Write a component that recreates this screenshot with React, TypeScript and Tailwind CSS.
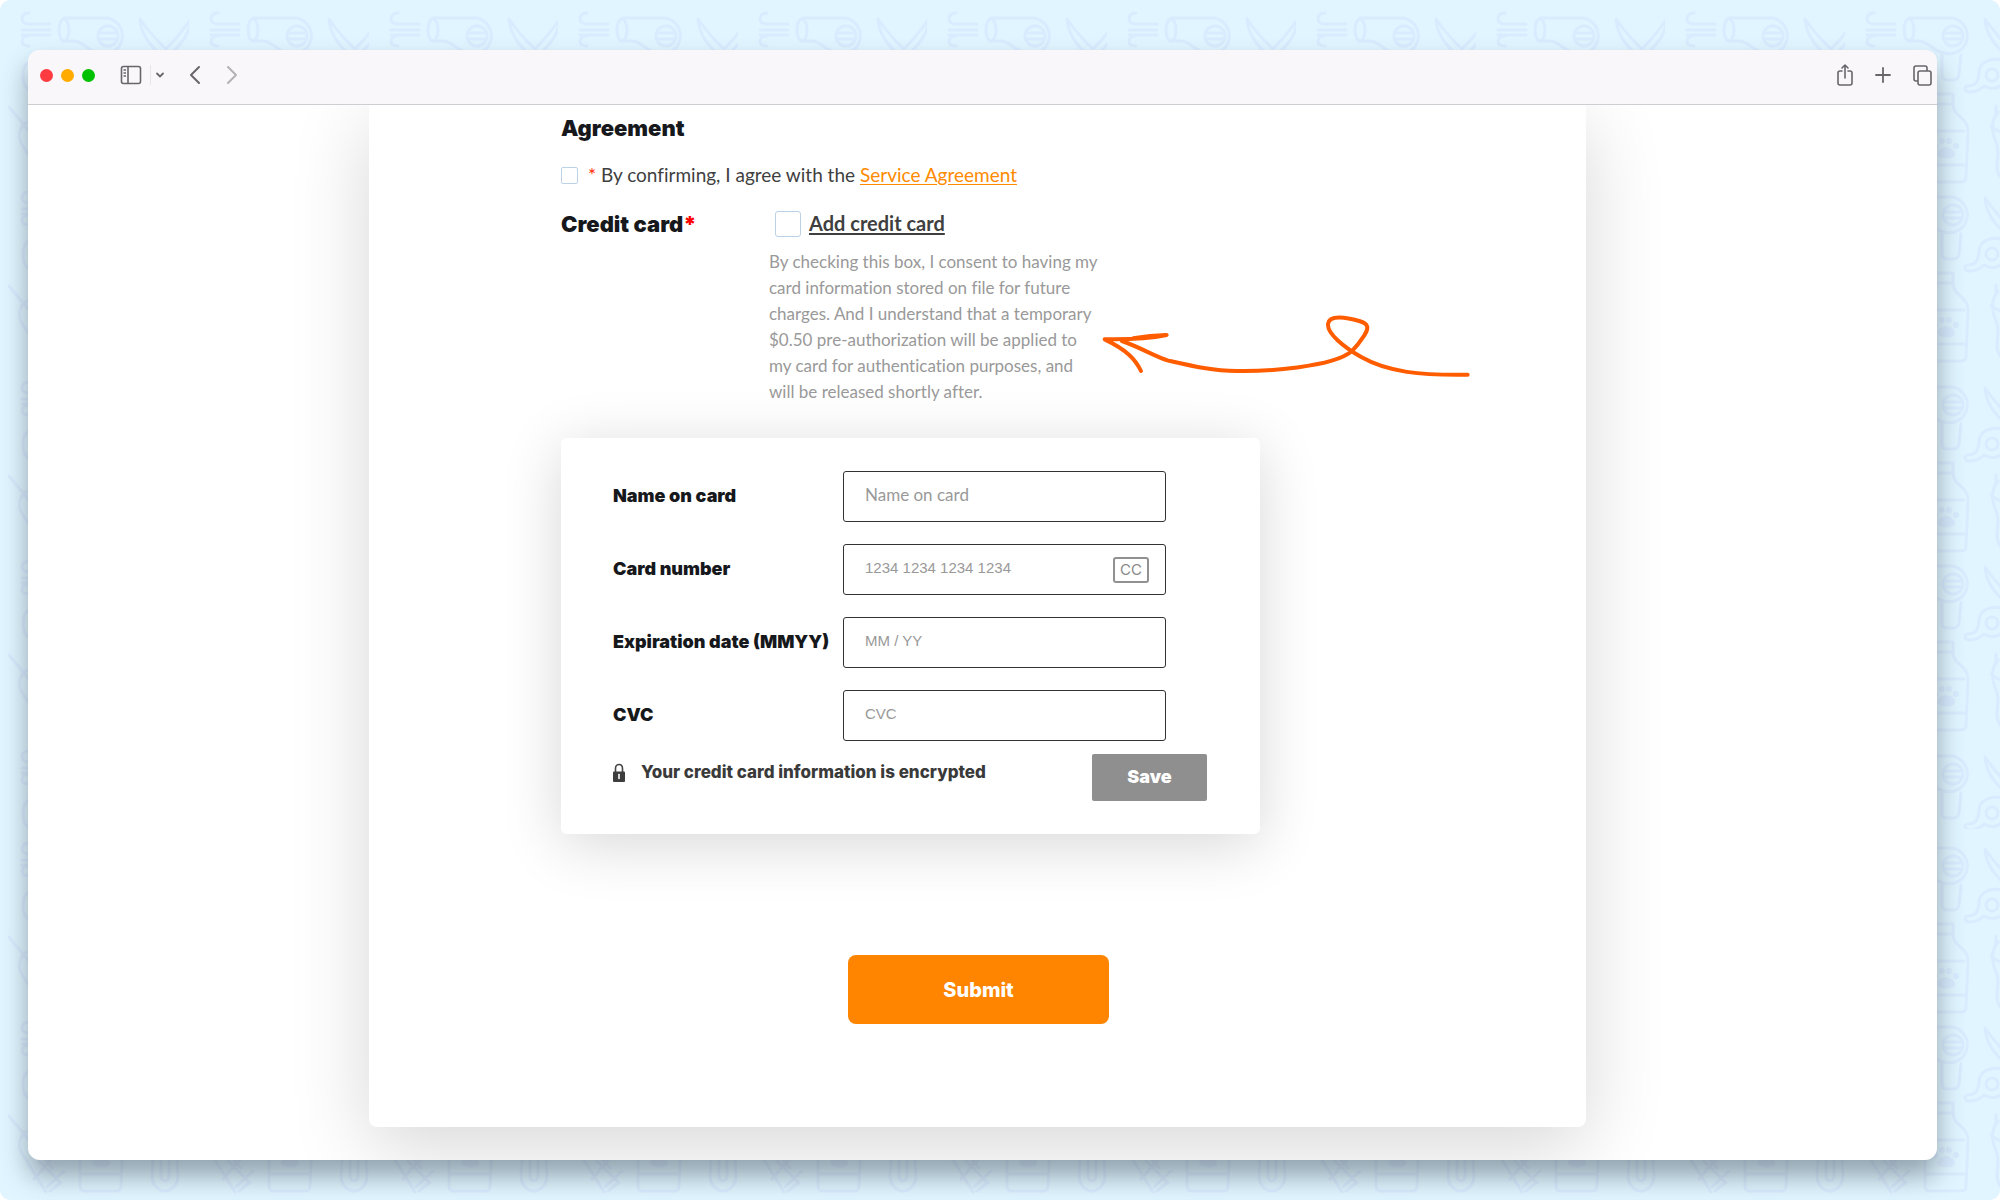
import { useState } from 'react';
import type { ReactNode } from 'react';

const TILE_COLUMNS = [0, 189, 369, 558, 738, 927, 1107, 1296, 1476, 1665, 1845];
const TILE_ROWS = [0, 179, 369, 548, 738, 830, 1009];

const cardFields = [
  { id: 'card-name', label: 'Name on card', placeholder: 'Name on card', inputFont: 'font-[Lato] text-[17px]' },
  { id: 'card-number', label: 'Card number', placeholder: '1234 1234 1234 1234', inputFont: "font-['Liberation_Sans'] text-[15px]" },
  { id: 'card-expiry', label: 'Expiration date (MMYY)', placeholder: 'MM / YY', inputFont: "font-['Liberation_Sans'] text-[15px]" },
  { id: 'card-cvc', label: 'CVC', placeholder: 'CVC', inputFont: "font-['Liberation_Sans'] text-[15px]" },
];

// Grooming tools wallpaper behind the browser window
function Wallpaper() {
  return (
    <svg className="absolute inset-0 h-full w-full" fill="none" stroke="#d9ebfe" strokeWidth="3" strokeLinecap="round" strokeLinejoin="round" aria-hidden="true">
      <defs>
        <g id="tools">
          {/* Wind */}
          <path d="M29 13c-5 0-7 3-7 6s3 5 7 5h21M22 30h28M22 35h28M29 46c-5 0-7-2-7-5s3-5 7-5" />
          {/* Hair dryer */}
          <ellipse cx="64" cy="30" rx="5" ry="11" />
          <path d="M64 18h43a18 18 0 1 1-8 35C88 51 83 41 74 41H64M97 55v20q0 5 5 5h6q5 0 6-5l2-20" />
          <circle cx="108" cy="36" r="10" />
          <path d="M99 33h18M99 39h18" />
          {/* Scissors */}
          <path d="M140 19c1 14 8 25 23 38l3-8c-11-10-19-20-26-30zM191 19c-1 14-8 25-28 42M191 19c-7 10-15 20-25 30" />
          <circle cx="147" cy="75" r="6" />
          <path d="M160 61c-14-5-26 1-26 12-1 11-5 13-12 13-3 1-2 6 2 6 7 0 11-2 15-6 8 5 17 2 20-5" />
          {/* Brush and syringe */}
          <path d="M30 62c-6 2-7 7-7 14s2 12 7 14M9 107l15 18c-6 6-6 14-1 21l23 37M21 128c2-5 8-8 12-4M9 107l43 52M34 170l19-22M47 178l17-16M39 152l22 22M50 182l10-8" />
          {/* Shampoo bottle */}
          <path d="M84 94h24v10H84zM88 104c0 14-8 15-8 27v46q0 5 5 5h31q5 0 5-5l2-46c0-14-15-14-15-27M80 131h39M80 165h39" />
          <path d="M92 154c2-9 16-9 18 0 0 6-16 6-18 0z" fill="#d9ebfe" stroke="none" />
          <g fill="#d9ebfe" stroke="none">
            <circle cx="90" cy="146" r="3" />
            <circle cx="97" cy="141" r="3" />
            <circle cx="104" cy="141" r="3" />
            <circle cx="111" cy="146" r="3" />
          </g>
          {/* Clipper */}
          <path d="M153 112c-8 10-6 20-2 30 4 8 1 14 1 26 1 9 7 14 13 14s12-5 13-14c0-12-3-18 1-26M151 106v9M161 145h8v23q-1 4-4 4t-4-4zM146 126c6 6 14 8 22 8" />
        </g>
      </defs>
      {TILE_ROWS.map((y) =>
        TILE_COLUMNS.map((x, i) => (
          <svg key={`${x}-${y}`} x={x} y={y} width={i % 2 ? 180 : 189} height={y === 738 ? 91 : 189}>
            <use href="#tools" />
          </svg>
        ))
      )}
    </svg>
  );
}

function ToolbarButton({ label, className = '', children }: { label: string; className?: string; children: ReactNode }) {
  return (
    <button type="button" aria-label={label} className={`flex shrink-0 items-center justify-center ${className}`}>
      {children}
    </button>
  );
}

function Toolbar() {
  return (
    <header className="relative z-10 flex h-[55px] items-center border-b border-[#cfccd2] bg-[#faf7fb] pr-1 pb-1 pl-3 text-[#69656b]">
      <div className="flex gap-2">
        <span className="h-[13px] w-[13px] rounded-full bg-[#ff3b42]" />
        <span className="h-[13px] w-[13px] rounded-full bg-[#ffab00]" />
        <span className="h-[13px] w-[13px] rounded-full bg-[#00c100]" />
      </div>
      <ToolbarButton label="Toggle sidebar" className="ml-[25px]">
        <svg width="22" height="20" fill="none" stroke="currentColor" strokeWidth="1.6">
          <rect x="1.5" y="1.5" width="19" height="17" rx="2" />
          <path d="M8 1.5v17M3.5 5H6M3.5 8H6M3.5 11H6" />
        </svg>
      </ToolbarButton>
      <span className="ml-2 h-5 w-px bg-[#e9e5ea]" />
      <ToolbarButton label="Tab groups" className="ml-1">
        <svg width="10" height="8" fill="none" stroke="currentColor" strokeWidth="1.8" strokeLinecap="round">
          <path d="M2 2.500 5 5.500 8 2.500" />
        </svg>
      </ToolbarButton>
      <ToolbarButton label="Back" className="ml-6">
        <svg width="12" height="20" fill="none" stroke="currentColor" strokeWidth="2" strokeLinecap="round" strokeLinejoin="round">
          <path d="M10 2 2 10l8 8" />
        </svg>
      </ToolbarButton>
      <ToolbarButton label="Forward" className="ml-[25px] text-[#b5b1b7]">
        <svg width="12" height="20" fill="none" stroke="currentColor" strokeWidth="2" strokeLinecap="round" strokeLinejoin="round">
          <path d="m2 2 8 8-8 8" />
        </svg>
      </ToolbarButton>
      <div className="ml-auto flex items-center gap-[21px]">
        <ToolbarButton label="Share">
          <svg width="18" height="24" fill="none" stroke="currentColor" strokeWidth="1.6" strokeLinecap="round" strokeLinejoin="round">
            <path d="M6 8H4Q2 8 2 10v10q0 2 2 2h10q2 0 2-2V10q0-2-2-2h-2M9 15V2M6 5l3-3 3 3" />
          </svg>
        </ToolbarButton>
        <ToolbarButton label="New tab">
          <svg width="16" height="18" fill="none" stroke="currentColor" strokeWidth="1.8" strokeLinecap="round">
            <path d="M8 2v14M1 9h14" />
          </svg>
        </ToolbarButton>
        <ToolbarButton label="Tab overview">
          <svg width="21" height="23" fill="none" stroke="currentColor" strokeWidth="1.6" strokeLinejoin="round">
            <rect x="6" y="7" width="13" height="14" rx="2" />
            <path d="M6 17H4q-2 0-2-2V4q0-2 2-2h9q2 0 2 2v3" />
          </svg>
        </ToolbarButton>
      </div>
    </header>
  );
}

function HandDrawnArrow() {
  return (
    <svg
      className="pointer-events-none absolute top-[205px] left-[731px] h-[70px] w-[373px]"
      viewBox="60 60 1119 210"
      fill="none"
      stroke="#ff5c00"
      strokeWidth="12"
      strokeLinecap="round"
      strokeLinejoin="round"
      aria-hidden="true"
    >
      <path d="M1163 254C1020 256 925 247 845 202C790 170 741 130 744 102C747 72 803 83 838 93C865 101 868 113 853 136Q834 165 815 184C760 232 550 245 470 243C400 243 340 229 265 212C230 202 185 174 126 153" />
      <path d="M183 243C166 207 140 180 74 148C120 147 180 151 260 135Q210 136 160 145" />
    </svg>
  );
}

function CardForm() {
  return (
    <fieldset className="mt-[33px] w-[699px] rounded-md bg-white pt-[33px] pr-[53px] pb-[33px] pl-[52px] shadow-[0_10px_60px_rgba(0,0,0,0.16)]">
      <div className="flex flex-col gap-[22px]">
        {cardFields.map((field) => (
          <div key={field.id} className="flex items-center">
            <label htmlFor={field.id} className="w-[230px] shrink-0 pb-0.5 font-[Inter] text-[18px] font-black whitespace-nowrap text-[#16181c]">
              {field.label}
            </label>
            <div className="relative w-[323px]">
              <input
                id={field.id}
                type="text"
                placeholder={field.placeholder}
                className={`block h-[51px] w-full rounded-[3px] border border-[#333] px-[21px] pb-1 outline-none placeholder:text-[#999] ${field.inputFont}`}
              />
              {field.id === 'card-number' && (
                <span className="absolute top-[13px] right-[17px] flex h-[26px] w-9 items-center justify-center rounded-[3px] border-2 border-[#919191] font-[Inter] text-[15px] text-[#8a8a8a]">
                  CC
                </span>
              )}
            </div>
          </div>
        ))}
      </div>
      <div className="mt-[13px] flex items-start">
        <svg className="mt-[9px] h-5 w-3" viewBox="0 0 12 20" aria-hidden="true">
          <path d="M2.500 9V5.500C2.500 3 4 1.500 6 1.500S9.500 3 9.500 5.500V9" fill="none" stroke="#444" strokeWidth="1.6" />
          <rect y="8.5" width="12" height="10.5" rx="1" fill="#3d3d3d" />
          <path d="M6 11.500v4" stroke="#fff" strokeWidth="1.6" strokeLinecap="round" />
        </svg>
        <p className="mt-1.5 ml-4 font-[Inter] text-[17px] leading-6 font-extrabold text-[#3a3a3a]">Your credit card information is encrypted</p>
        <button type="button" className="ml-auto h-[47px] w-[115px] rounded-xs bg-[#8f8f8f] pb-0.5 font-[Inter] text-[18px] font-black text-white">
          Save
        </button>
      </div>
    </fieldset>
  );
}

export default function App() {
  const [agreed, setAgreed] = useState(false);
  const [addCard, setAddCard] = useState(false);

  return (
    <div className="bg-white">
      <div className="relative flex min-h-screen flex-col overflow-hidden rounded-[10px] bg-[#e0f5ff] pt-[50px] pr-[63px] pb-10 pl-7">
        <Wallpaper />
        <div className="relative flex grow flex-col rounded-xl bg-white shadow-[0_16px_26px_rgba(50,65,75,0.45)]">
          <div className="flex grow flex-col overflow-hidden rounded-xl">
            <Toolbar />
            <main className="grow pr-[351px] pb-8 pl-[341px]">
              <form
                onSubmit={(e) => e.preventDefault()}
                className="relative rounded-b-lg bg-white pt-[7px] pb-[103px] pl-48 font-[Lato] text-[#3f3f3f] shadow-[0_20px_80px_rgba(0,0,0,0.16)] [font-variant-ligatures:no-common-ligatures]"
              >
                <h2 className="font-[Inter] text-[22px] leading-8 font-black text-[#16181c]">Agreement</h2>

                <div className="mt-[19px] flex h-6 items-center">
                  <input
                    id="agree"
                    type="checkbox"
                    checked={agreed}
                    onChange={(e) => setAgreed(e.target.checked)}
                    className="h-[17px] w-[17px] appearance-none rounded-xs border border-[#bcd2e6] bg-white checked:bg-[#ff8500]"
                  />
                  <label htmlFor="agree" className="ml-2.5 text-[19px] leading-6">
                    <span className="text-[#ff2a00]">*</span> By confirming, I agree with the{' '}
                    <a href="#service-agreement" className="text-[#ff8a00] underline underline-offset-2">
                      Service Agreement
                    </a>
                  </label>
                </div>

                <div className="mt-[23px] flex">
                  <h2 className="w-[208px] font-[Inter] text-[22px] leading-7 font-black text-[#16181c]">
                    Credit card<span className="text-[#ff0000]">*</span>
                  </h2>
                  <div className="w-[340px]">
                    <div className="flex items-center pl-1.5">
                      <input
                        id="add-card"
                        type="checkbox"
                        checked={addCard}
                        onChange={(e) => setAddCard(e.target.checked)}
                        className="h-[26px] w-[26px] appearance-none rounded-[3px] border border-[#bcd2e6] bg-white checked:bg-[#ff8500]"
                      />
                      <label htmlFor="add-card" className="ml-2 pb-0.5 text-[20px] leading-[26px] font-bold underline underline-offset-2">
                        Add credit card
                      </label>
                    </div>
                    <p className="mt-[11px] text-[17px] leading-[26px] text-[#999]">
                      By checking this box, I consent to having my
                      <br />
                      card information stored on file for future
                      <br />
                      charges. And I understand that a temporary
                      <br />
                      $0.50 pre-authorization will be applied to
                      <br />
                      my card for authentication purposes, and
                      <br />
                      will be released shortly after.
                    </p>
                  </div>
                </div>

                <CardForm />

                <button
                  type="submit"
                  className="mt-[121px] ml-[287px] block h-[69px] w-[261px] rounded-lg bg-[#ff8500] font-[Inter] text-[20px] font-extrabold text-white"
                >
                  Submit
                </button>

                <HandDrawnArrow />
              </form>
            </main>
          </div>
        </div>
      </div>
    </div>
  );
}
